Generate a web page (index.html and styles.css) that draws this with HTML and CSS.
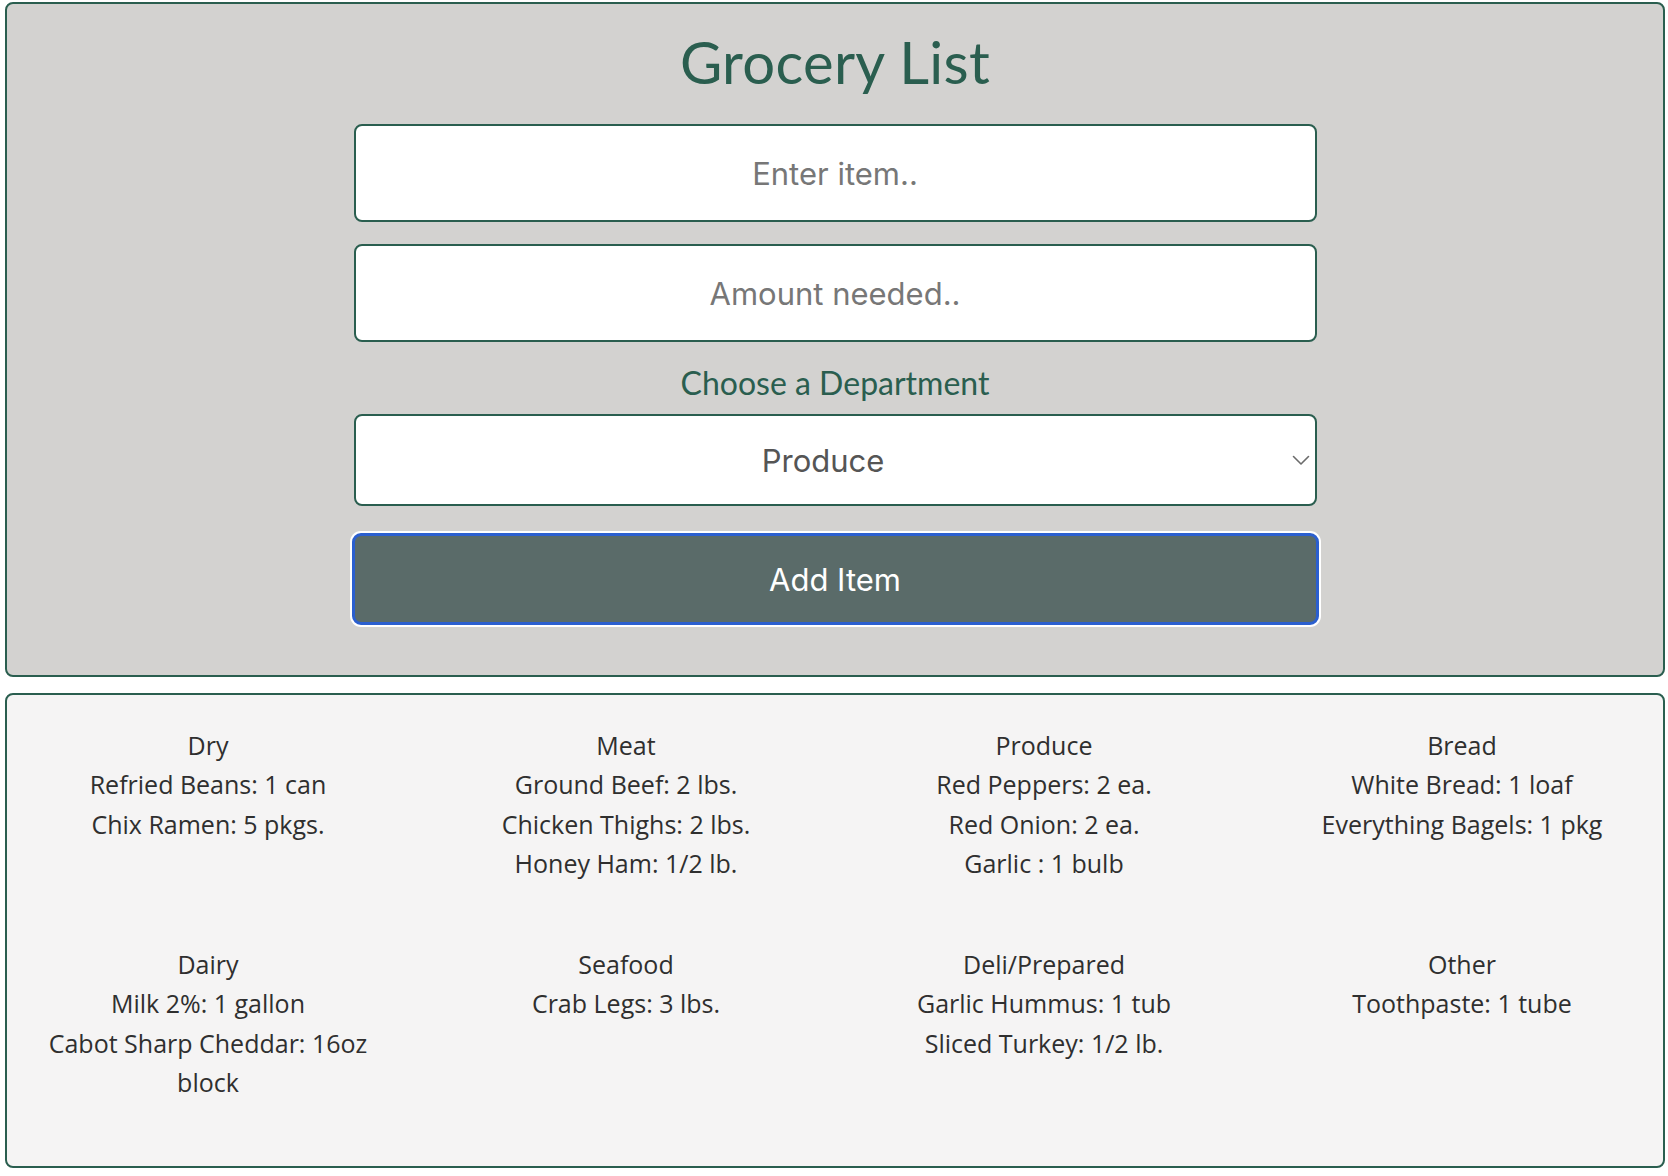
FILE: index.html
```html
<!DOCTYPE html>
<html lang="en">
<head>
<meta charset="utf-8">
<title>Grocery List</title>
<link rel="stylesheet" href="styles.css">
</head>
<body>
<div class="page">
  <section class="entry-card">
    <h1 class="title">Grocery List</h1>
    <form class="entry-form">
      <input class="field" type="text" placeholder="Enter item..">
      <input class="field field-amount" type="text" placeholder="Amount needed..">
      <label class="dept-label" for="dept">Choose a Department</label>
      <div class="select-wrap">
        <select id="dept" class="field select">
          <option>Dry</option>
          <option>Meat</option>
          <option selected>Produce</option>
          <option>Bread</option>
          <option>Dairy</option>
          <option>Seafood</option>
          <option>Deli/Prepared</option>
          <option>Other</option>
        </select>
        <svg class="chevron" width="18" height="11" viewBox="0 0 18 11" aria-hidden="true">
          <path d="M1.5 1.5 L9 9 L16.5 1.5" fill="none" stroke="#6b6b6b" stroke-width="1.6" stroke-linecap="round" stroke-linejoin="round"/>
        </svg>
      </div>
      <button type="button" class="add-btn">Add Item</button>
    </form>
  </section>

  <section class="list-card">
    <div class="dept">
      <div>Dry</div>
      <div>Refried Beans: 1 can</div>
      <div>Chix Ramen: 5 pkgs.</div>
    </div>
    <div class="dept">
      <div>Meat</div>
      <div>Ground Beef: 2 lbs.</div>
      <div>Chicken Thighs: 2 lbs.</div>
      <div>Honey Ham: 1/2 lb.</div>
    </div>
    <div class="dept">
      <div>Produce</div>
      <div>Red Peppers: 2 ea.</div>
      <div>Red Onion: 2 ea.</div>
      <div>Garlic : 1 bulb</div>
    </div>
    <div class="dept">
      <div>Bread</div>
      <div>White Bread: 1 loaf</div>
      <div>Everything Bagels: 1 pkg</div>
    </div>
    <div class="dept">
      <div>Dairy</div>
      <div>Milk 2%: 1 gallon</div>
      <div>Cabot Sharp Cheddar: 16oz block</div>
    </div>
    <div class="dept">
      <div>Seafood</div>
      <div>Crab Legs: 3 lbs.</div>
    </div>
    <div class="dept">
      <div>Deli/Prepared</div>
      <div>Garlic Hummus: 1 tub</div>
      <div>Sliced Turkey: 1/2 lb.</div>
    </div>
    <div class="dept">
      <div>Other</div>
      <div>Toothpaste: 1 tube</div>
    </div>
  </section>
</div>
</body>
</html>
```

FILE: styles.css
```css
* {
  box-sizing: border-box;
}

html, body {
  margin: 0;
  background: #ffffff;
}

body {
  font-family: "Open Sans", Lato, sans-serif;
  color: #333333;
}

.page {
  padding: 2px 3px 8px 5px;
  display: flex;
  flex-direction: column;
  gap: 16px;
}

.entry-card {
  background: #d3d2d0;
  border: 2px solid #2a5e4f;
  border-radius: 8px;
  display: flex;
  flex-direction: column;
  align-items: center;
  padding: 23px 0 50px;
}

.title {
  margin: 0;
  font-family: Lato, sans-serif;
  font-weight: 400;
  font-size: 58px;
  line-height: 70px;
  color: #2a5e4f;
  letter-spacing: 0.3px;
}

.entry-form {
  width: 963px;
  margin-top: 27px;
  display: flex;
  flex-direction: column;
}

.field {
  display: block;
  width: 100%;
  height: 98px;
  border: 2px solid #2a5e4f;
  border-radius: 8px;
  background: #ffffff;
  font-family: Inter, Roboto, sans-serif;
  font-size: 31px;
  color: #555555;
  text-align: center;
  outline: none;
}

.field::placeholder {
  color: #777777;
}

.field-amount {
  margin-top: 22px;
}

.dept-label {
  display: block;
  margin-top: 23px;
  text-align: center;
  font-family: Lato, sans-serif;
  font-size: 32px;
  line-height: 36px;
  color: #2a5e4f;
}

.select-wrap {
  position: relative;
  margin-top: 13px;
}

.select {
  height: 92px;
  appearance: none;
  -webkit-appearance: none;
  text-align: center;
  text-align-last: center;
  padding: 0 24px 0 0;
  color: #555555;
}

.chevron {
  position: absolute;
  right: 7px;
  top: 41px;
}

.add-btn {
  margin: 27px -2px 0;
  height: 92px;
  background: #5a6b69;
  border: 3px solid #2b5fcf;
  border-radius: 9px;
  box-shadow: 0 0 0 2px #ffffff;
  color: #ffffff;
  font-family: Inter, Roboto, sans-serif;
  font-size: 31px;
  cursor: pointer;
}

.list-card {
  background: #f5f4f4;
  border: 2px solid #2a5e4f;
  border-radius: 8px;
  padding: 31px 20px 64px;
  display: grid;
  grid-template-columns: repeat(4, 1fr);
  column-gap: 56px;
  row-gap: 62px;
  font-size: 25px;
  line-height: 39.3px;
  text-align: center;
  color: #2f2f2f;
}
```
